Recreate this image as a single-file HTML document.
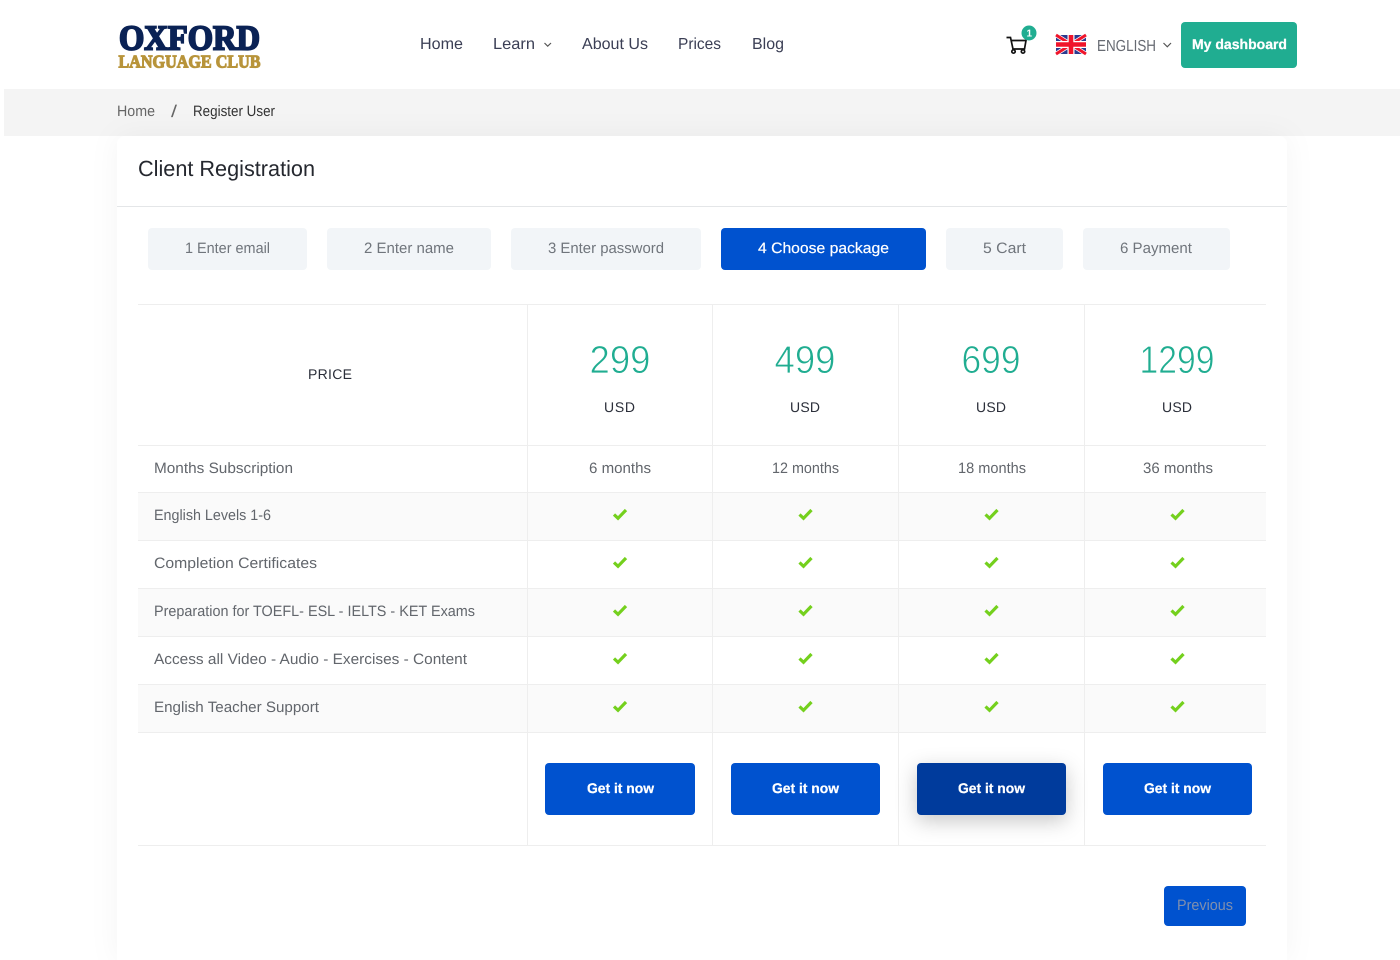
<!DOCTYPE html>
<html lang="en">
<head>
<meta charset="utf-8">
<title>Client Registration</title>
<style>
html,body{margin:0;padding:0;background:#fff;width:1400px;height:960px;overflow:hidden}
svg{display:block}
text{font-family:"Liberation Sans",Arial,sans-serif;white-space:pre;text-rendering:geometricPrecision}
.nav{font-size:16px;fill:#3b3f55}
.row{font-size:15px;fill:#62666c}
.tab{font-size:15px;fill:#70757c}
.btn{font-size:14px;font-weight:700;fill:#fff;stroke:#fff;stroke-width:.25px}
.usd{font-size:14px;fill:#2b2f3a}
.price{font-size:39px;fill:#20ad91;stroke:#fff;stroke-width:.8px}
.ln{fill:#eeeeee}
</style>
</head>
<body>
<svg width="1400" height="960" viewBox="0 0 1400 960" xmlns="http://www.w3.org/2000/svg">
<defs>
<path id="chk" d="M-6 0.5 L-2 4.3 L6 -4" fill="none" stroke="#74d01d" stroke-width="3.2"/>
</defs>
<rect width="1400" height="960" fill="#fff"/>
<!-- Breadcrumb band -->
<rect x="4" y="89" width="1396" height="47" fill="#f4f4f4"/>
<!-- Logo -->
<text x="119" y="49.3" textLength="141" lengthAdjust="spacingAndGlyphs" style="font-family:'Liberation Serif',serif;font-size:35px;font-weight:700;fill:#0a2255;stroke:#0a2255;stroke-width:2px">OXFORD</text>
<text x="118.5" y="67.5" textLength="142" lengthAdjust="spacingAndGlyphs" style="font-family:'Liberation Serif',serif;font-size:18px;font-weight:700;fill:#b8943a;stroke:#b8943a;stroke-width:1.1px">LANGUAGE CLUB</text>
<!-- Nav -->
<text class="nav" x="420" y="49" textLength="43" lengthAdjust="spacingAndGlyphs">Home</text>
<text class="nav" x="493" y="49" textLength="42" lengthAdjust="spacingAndGlyphs">Learn</text>
<path d="M544.5 43 L547.7 46.2 L551 43" fill="none" stroke="#555" stroke-width="1.2"/>
<text class="nav" x="582" y="49" textLength="66" lengthAdjust="spacingAndGlyphs">About Us</text>
<text class="nav" x="678" y="49" textLength="43" lengthAdjust="spacingAndGlyphs">Prices</text>
<text class="nav" x="752" y="49" textLength="32" lengthAdjust="spacingAndGlyphs">Blog</text>
<!-- Cart -->
<g fill="none" stroke="#111" stroke-width="1.7">
<path d="M1006.5 37.5 H1010.5 L1013 49 H1024.5 L1026 40.5 H1011"/>
<circle cx="1013.5" cy="51.5" r="1.7"/>
<circle cx="1023" cy="51.5" r="1.7"/>
</g>
<circle cx="1029" cy="33" r="7.5" fill="#20ad91"/>
<text x="1026.5" y="36.5" style="font-size:10px;font-weight:700;fill:#fff">1</text>
<!-- Flag -->
<g>
<rect x="1056" y="35" width="30" height="19" fill="#2b3a8f"/>
<path d="M1056 35 L1086 54 M1086 35 L1056 54" stroke="#fff" stroke-width="4.4"/>
<path d="M1056 35 L1086 54 M1086 35 L1056 54" stroke="#f0142a" stroke-width="3"/>
<path d="M1071 35 V54 M1056 44.5 H1086" stroke="#fff" stroke-width="7"/>
<path d="M1071 35 V54 M1056 44.5 H1086" stroke="#f0142a" stroke-width="4.6"/>
</g>
<text x="1097" y="51" textLength="59" lengthAdjust="spacingAndGlyphs" style="font-size:16px;fill:#666a72">ENGLISH</text>
<path d="M1163.5 43 L1167.3 46.8 L1171 43" fill="none" stroke="#555" stroke-width="1.2"/>
<!-- Dashboard button -->
<rect x="1181" y="22" width="116" height="46" rx="4" fill="#20ad91"/>
<text class="btn" x="1192" y="49" textLength="95" lengthAdjust="spacingAndGlyphs">My dashboard</text>
<!-- Breadcrumb -->
<text x="117" y="116" textLength="38" lengthAdjust="spacingAndGlyphs" style="font-size:15px;fill:#666">Home</text>
<text x="171" y="117" textLength="6" lengthAdjust="spacingAndGlyphs" style="font-size:17px;fill:#666">/</text>
<text x="193" y="116" textLength="82" lengthAdjust="spacingAndGlyphs" style="font-size:15px;fill:#333">Register User</text>
<!-- Card -->
<path d="M117 960 V144 a8 8 0 0 1 8 -8 H1279 a8 8 0 0 1 8 8 V960 Z" fill="#fff" style="filter:drop-shadow(0 0 14px rgba(0,0,0,.045))"/>
<text x="138" y="176" textLength="177" lengthAdjust="spacingAndGlyphs" style="font-size:22px;fill:#25282f">Client Registration</text>
<rect x="117" y="206" width="1170" height="1" fill="#e4e6e8"/>
<!-- Tabs -->
<rect x="148" y="228" width="159" height="42" rx="4" fill="#f2f5f8"/>
<rect x="327" y="228" width="164" height="42" rx="4" fill="#f2f5f8"/>
<rect x="511" y="228" width="190" height="42" rx="4" fill="#f2f5f8"/>
<rect x="721" y="228" width="205" height="42" rx="4" fill="#0052cf"/>
<rect x="946" y="228" width="117" height="42" rx="4" fill="#f2f5f8"/>
<rect x="1083" y="228" width="147" height="42" rx="4" fill="#f2f5f8"/>
<text class="tab" x="185" y="253" textLength="85" lengthAdjust="spacingAndGlyphs">1 Enter email</text>
<text class="tab" x="364" y="253" textLength="90" lengthAdjust="spacingAndGlyphs">2 Enter name</text>
<text class="tab" x="548" y="253" textLength="116" lengthAdjust="spacingAndGlyphs">3 Enter password</text>
<text x="758" y="253" textLength="131" lengthAdjust="spacingAndGlyphs" style="font-size:15px;fill:#fff;stroke:#fff;stroke-width:.2px">4 Choose package</text>
<text class="tab" x="983" y="253" textLength="43" lengthAdjust="spacingAndGlyphs">5 Cart</text>
<text class="tab" x="1120" y="253" textLength="72" lengthAdjust="spacingAndGlyphs">6 Payment</text>
<!-- Table backgrounds -->
<rect x="138" y="493" width="1128" height="47" fill="#fafafa"/>
<rect x="138" y="589" width="1128" height="47" fill="#fafafa"/>
<rect x="138" y="685" width="1128" height="47" fill="#fafafa"/>
<!-- Table lines -->
<rect class="ln" x="138" y="304" width="1128" height="1"/>
<rect class="ln" x="138" y="445" width="1128" height="1"/>
<rect class="ln" x="138" y="492" width="1128" height="1"/>
<rect class="ln" x="138" y="540" width="1128" height="1"/>
<rect class="ln" x="138" y="588" width="1128" height="1"/>
<rect class="ln" x="138" y="636" width="1128" height="1"/>
<rect class="ln" x="138" y="684" width="1128" height="1"/>
<rect class="ln" x="138" y="732" width="1128" height="1"/>
<rect class="ln" x="138" y="845" width="1128" height="1"/>
<rect class="ln" x="527" y="304" width="1" height="541"/>
<rect class="ln" x="712" y="304" width="1" height="541"/>
<rect class="ln" x="898" y="304" width="1" height="541"/>
<rect class="ln" x="1084" y="304" width="1" height="541"/>
<!-- Price row -->
<text x="308" y="379" textLength="44" lengthAdjust="spacing" style="font-size:14px;fill:#2b2f3a">PRICE</text>
<text class="price" x="589.5" y="373" textLength="61" lengthAdjust="spacingAndGlyphs">299</text>
<text class="price" x="774.5" y="373" textLength="61" lengthAdjust="spacingAndGlyphs">499</text>
<text class="price" x="961.5" y="373" textLength="59" lengthAdjust="spacingAndGlyphs">699</text>
<text class="price" x="1139.5" y="373" textLength="75" lengthAdjust="spacingAndGlyphs">1299</text>
<text class="usd" x="604" y="412" textLength="31" lengthAdjust="spacing">USD</text>
<text class="usd" x="790" y="412" textLength="30" lengthAdjust="spacing">USD</text>
<text class="usd" x="976" y="412" textLength="30" lengthAdjust="spacing">USD</text>
<text class="usd" x="1162" y="412" textLength="30" lengthAdjust="spacing">USD</text>
<!-- Rows -->
<text class="row" x="154" y="473" textLength="139" lengthAdjust="spacingAndGlyphs">Months Subscription</text>
<text class="row" x="589" y="473" textLength="62" lengthAdjust="spacingAndGlyphs">6 months</text>
<text class="row" x="772" y="473" textLength="67" lengthAdjust="spacingAndGlyphs">12 months</text>
<text class="row" x="958" y="473" textLength="68" lengthAdjust="spacingAndGlyphs">18 months</text>
<text class="row" x="1143" y="473" textLength="70" lengthAdjust="spacingAndGlyphs">36 months</text>
<text class="row" x="154" y="520" textLength="117" lengthAdjust="spacingAndGlyphs">English Levels 1-6</text>
<text class="row" x="154" y="568" textLength="163" lengthAdjust="spacingAndGlyphs">Completion Certificates</text>
<text class="row" x="154" y="616" textLength="321" lengthAdjust="spacingAndGlyphs">Preparation for TOEFL- ESL - IELTS - KET Exams</text>
<text class="row" x="154" y="664" textLength="313" lengthAdjust="spacingAndGlyphs">Access all Video - Audio - Exercises - Content</text>
<text class="row" x="154" y="712" textLength="165" lengthAdjust="spacingAndGlyphs">English Teacher Support</text>
<!-- Checks -->
<use href="#chk" x="620" y="514"/><use href="#chk" x="805.5" y="514"/><use href="#chk" x="991.5" y="514"/><use href="#chk" x="1177.5" y="514"/>
<use href="#chk" x="620" y="562"/><use href="#chk" x="805.5" y="562"/><use href="#chk" x="991.5" y="562"/><use href="#chk" x="1177.5" y="562"/>
<use href="#chk" x="620" y="610"/><use href="#chk" x="805.5" y="610"/><use href="#chk" x="991.5" y="610"/><use href="#chk" x="1177.5" y="610"/>
<use href="#chk" x="620" y="658"/><use href="#chk" x="805.5" y="658"/><use href="#chk" x="991.5" y="658"/><use href="#chk" x="1177.5" y="658"/>
<use href="#chk" x="620" y="706"/><use href="#chk" x="805.5" y="706"/><use href="#chk" x="991.5" y="706"/><use href="#chk" x="1177.5" y="706"/>
<!-- Buttons -->
<rect x="545" y="763" width="150" height="52" rx="4" fill="#0052cf"/>
<rect x="731" y="763" width="149" height="52" rx="4" fill="#0052cf"/>
<rect x="917" y="763" width="149" height="52" rx="4" fill="#003b9c" style="filter:drop-shadow(0 6px 10px rgba(0,0,0,.22))"/>
<rect x="1103" y="763" width="149" height="52" rx="4" fill="#0052cf"/>
<text class="btn" x="587" y="793" textLength="67" lengthAdjust="spacingAndGlyphs">Get it now</text>
<text class="btn" x="772" y="793" textLength="67" lengthAdjust="spacingAndGlyphs">Get it now</text>
<text class="btn" x="958" y="793" textLength="67" lengthAdjust="spacingAndGlyphs">Get it now</text>
<text class="btn" x="1144" y="793" textLength="67" lengthAdjust="spacingAndGlyphs">Get it now</text>
<!-- Previous -->
<rect x="1164" y="886" width="82" height="40" rx="4" fill="#0052cf"/>
<text x="1177" y="910" textLength="56" lengthAdjust="spacingAndGlyphs" style="font-size:15px;fill:#7f8fae">Previous</text>
</svg>
</body>
</html>
